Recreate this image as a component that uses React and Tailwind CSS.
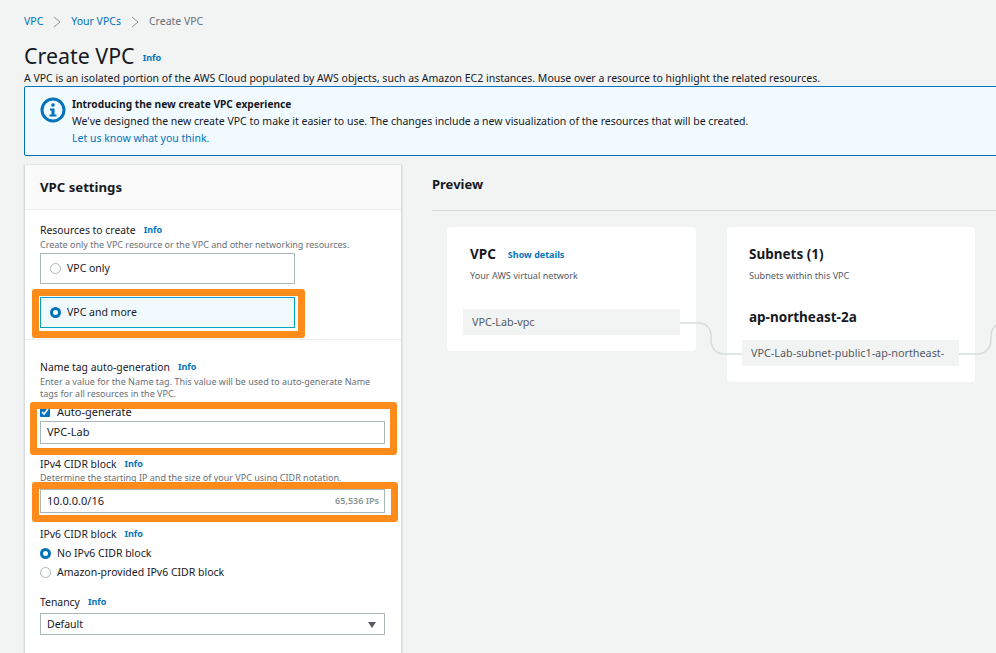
function Info({ className = "" }) {
  return <span className={`text-[9px] font-bold text-[#0073bb] ${className}`}>Info</span>;
}

function Radio({ on }) {
  return on ? (
    <span className="block h-[11px] w-[11px] shrink-0 rounded-full border-[3px] border-[#0073bb] bg-white" />
  ) : (
    <span className="block h-[11px] w-[11px] shrink-0 rounded-full border border-[#aab7b8] bg-white" />
  );
}

function Orange({ className }) {
  return <div className={`pointer-events-none absolute rounded-[3px] border-[7px] border-[#ff8c1a] ${className}`} />;
}

function Label({ children }) {
  return (
    <div className="flex h-[14px] items-center gap-2 text-[10.4px] leading-[14px] text-[#16191f]">
      <span>{children}</span>
      <Info />
    </div>
  );
}

function Desc({ children, className = "" }) {
  return <p className={`text-[9px] leading-[12px] text-[#687078] ${className}`}>{children}</p>;
}

function Chevron() {
  return (
    <svg width="8" height="12" viewBox="0 0 8 12" fill="none" stroke="#879596" strokeWidth="1">
      <path d="M1 1l6 5-6 5" />
    </svg>
  );
}

export default function App() {
  return (
    <div
      className="h-[653px] w-[996px] overflow-hidden bg-[#f2f3f3] pl-6 text-[#16191f]"
      style={{ fontFamily: '"Noto Sans", "Open Sans", sans-serif' }}
    >
      {/* breadcrumb */}
      <div className="flex h-[42px] items-center gap-[10px] pt-[2px] text-[10.5px] text-[#687078]">
        <span className="text-[#0073bb]">VPC</span>
        <Chevron />
        <span className="text-[#0073bb]">Your VPCs</span>
        <Chevron />
        <span>Create VPC</span>
      </div>

      {/* title */}
      <div className="flex h-[28px] items-center gap-[8px]">
        <h1 className="text-[21.4px] leading-[28px] font-normal">Create VPC</h1>
        <Info className="mt-1" />
      </div>
      <p className="h-[16px] text-[10.5px] leading-[16px] whitespace-nowrap">
        A VPC is an isolated portion of the AWS Cloud populated by AWS objects, such as Amazon EC2 instances. Mouse over a resource to highlight the related resources.
      </p>

      {/* banner */}
      <div className="flex h-[70px] w-[1000px] gap-[6px] rounded-[2px] border border-[#0073bb] bg-[#f1faff] pl-[15px] pt-[10px] text-[10.5px] leading-[17px]">
        <svg width="26" height="26" viewBox="0 0 26 26" className="shrink-0">
          <circle cx="13" cy="13" r="11" fill="none" stroke="#0073bb" strokeWidth="3" />
          <circle cx="13" cy="8" r="1.8" fill="#0073bb" />
          <path d="M10 11.5h4.5v6H16.5v2h-7v-2h2v-4H10z" fill="#0073bb" />
        </svg>
        <div className="-mt-[1px]">
          <div className="text-[10.2px] font-bold">Introducing the new create VPC experience</div>
          <div>We've designed the new create VPC to make it easier to use. The changes include a new visualization of the resources that will be created.</div>
          <div className="text-[#0073bb]">Let us know what you think.</div>
        </div>
      </div>

      <div className="mt-[9px] flex">
        {/* settings card */}
        <section className="h-[520px] w-[378px] shrink-0 border-x border-[#d5dbdb] bg-white shadow-[0_0_2px_rgba(0,28,36,0.15)]">
          <header className="flex h-[45px] items-center border-b border-[#eaeded] bg-[#fafafa] pl-[15px] pt-[2px] text-[13.2px] font-bold">
            VPC settings
          </header>

          <div className="h-[130px] border-b border-[#eaeded] pl-[15px] pt-[13px]">
            <Label>Resources to create</Label>
            <Desc className="mt-[1px] leading-[13px]">Create only the VPC resource or the VPC and other networking resources.</Desc>
            <div className="mt-[2px] flex h-[31px] w-[255px] items-center gap-[6px] border border-[#aab7b8] bg-white pl-[9px] text-[10.5px]">
              <Radio />
              VPC only
            </div>
            <div className="relative mt-[13px] flex h-[31px] w-[255px] items-center gap-[6px] border border-[#00a1c9] bg-[#f1faff] pl-[9px] text-[10.5px]">
              <Radio on />
              VPC and more
              <Orange className="-left-[9px] -right-[11px] -top-[9px] -bottom-[11px]" />
            </div>
          </div>

          <div className="pl-[15px] pr-[16px] pt-[20px]">
            <Label>Name tag auto-generation</Label>
            <Desc className="mt-[2px]">Enter a value for the Name tag. This value will be used to auto-generate Name tags for all resources in the VPC.</Desc>

            <div className="relative mt-[6px]">
              <div className="flex h-[12px] items-center gap-[7px] text-[11px]">
                <span className="flex h-[10px] w-[10px] items-center justify-center rounded-[1px] bg-[#0073bb]">
                  <svg width="8" height="8" viewBox="0 0 8 8" fill="none" stroke="#fff" strokeWidth="1.6">
                    <path d="M1 4l2 2 4-5" />
                  </svg>
                </span>
                Auto-generate
              </div>
              <div className="mt-[3px] flex h-[23px] items-center border border-[#aab7b8] bg-white pl-[6px] text-[11px]">VPC-Lab</div>
              <Orange className="-left-[10px] -right-[12px] -top-[4px] -bottom-[11px]" />
            </div>

            <div className="mt-[13px]">
              <Label>IPv4 CIDR block</Label>
            </div>
            <Desc className="mt-[1px]">Determine the starting IP and the size of your VPC using CIDR notation.</Desc>
            <div className="relative mt-[5px] flex h-[24px] items-center justify-between border border-[#aab7b8] bg-white px-[5px] text-[11px]">
              <span className="pl-[1px]">10.0.0.0/16</span>
              <span className="text-[9px] font-semibold text-[#879596]">65,536 IPs</span>
              <Orange className="-left-[9px] -right-[14px] -top-[8px] -bottom-[10px]" />
            </div>

            <div className="mt-[14px]">
              <Label>IPv6 CIDR block</Label>
            </div>
            <div className="mt-[3px] flex h-[19px] items-center gap-[6px] text-[10.5px]">
              <Radio on />
              No IPv6 CIDR block
            </div>
            <div className="flex h-[19px] items-center gap-[6px] text-[10.5px]">
              <Radio />
              Amazon-provided IPv6 CIDR block
            </div>

            <div className="mt-[13px]">
              <Label>Tenancy</Label>
            </div>
            <div className="mt-[4px] flex h-[22px] items-center justify-between border border-[#aab7b8] bg-white pl-[6px] pr-[8px] pt-[1px] text-[10.5px]">
              <span>Default</span>
              <svg width="8" height="6" viewBox="0 0 8 6">
                <path d="M0 0h8L4 6z" fill="#545b64" />
              </svg>
            </div>
          </div>
        </section>

        {/* preview */}
        <section className="ml-[30px] flex-1">
          <div className="h-[46px] border-b border-[#d5dbdb] pt-[9px] text-[13px] leading-[20px] font-bold">Preview</div>
          <div className="relative ml-[15px] mt-[16px] flex items-start gap-[31px]">
            <div className="h-[124px] w-[249px] shrink-0 rounded-[4px] bg-white pl-[23px] pt-[17px]">
              <div className="flex h-[20px] items-center gap-[12px]">
                <span className="text-[13.5px] font-bold">VPC</span>
                <span className="mt-[2px] text-[9px] font-bold text-[#0073bb]">Show details</span>
              </div>
              <p className="mt-[6px] text-[9.1px] leading-[12px] text-[#545b64]">Your AWS virtual network</p>
              <div className="-ml-[7px] mt-[27px] flex h-[26px] w-[217px] items-center bg-[#f2f3f3] pl-[9px] text-[10.8px] text-[#545b64]">VPC-Lab-vpc</div>
            </div>
            <div className="h-[155px] w-[248px] shrink-0 rounded-[4px] bg-white pl-[22px] pt-[17px]">
              <div className="flex h-[20px] items-center text-[13.5px] font-bold">Subnets (1)</div>
              <p className="mt-[6px] text-[9.1px] leading-[12px] text-[#545b64]">Subnets within this VPC</p>
              <div className="mt-[25px] text-[13.5px] leading-[20px] font-bold">ap-northeast-2a</div>
              <div className="-ml-[7px] mt-[13px] flex h-[26px] w-[217px] items-center overflow-hidden whitespace-nowrap bg-[#f2f3f3] pl-[9px] text-[10.8px] text-[#545b64]">VPC-Lab-subnet-public1-ap-northeast-</div>
            </div>
            <svg className="absolute left-[233px] top-[95px]" width="62" height="33" viewBox="0 0 62 33" fill="none" stroke="#d5dbdb" strokeWidth="1.5">
              <path d="M0 1h18c8 0 13 5 13 13v4c0 8 5 14 13 14h18" />
            </svg>
            <svg className="absolute left-[512px] top-[95px]" width="50" height="33" viewBox="0 0 50 33" fill="none" stroke="#d5dbdb" strokeWidth="1.5">
              <path d="M0 32h18c8 0 14-6 14-14v-4c0-8 5-13 13-13h5" />
            </svg>
          </div>
        </section>
      </div>
    </div>
  );
}
